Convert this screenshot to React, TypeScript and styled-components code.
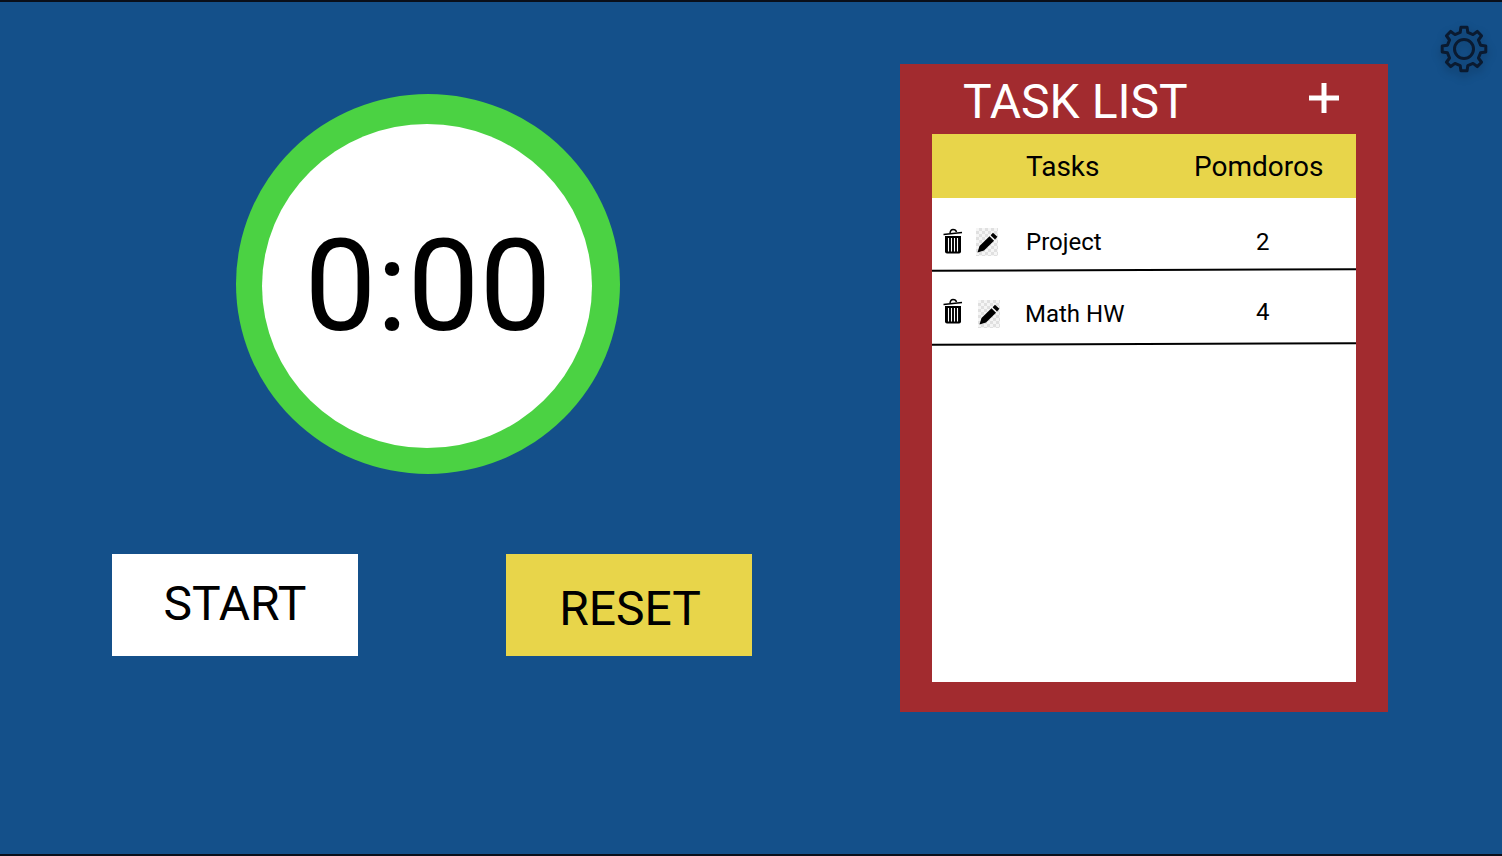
import React from "react";
import styled, { createGlobalStyle } from "styled-components";

interface ITask {
  name: string;
  pomodoros: number;
  height: number;
  trashTop: number;
  editLeft: number;
  nameLeft: number;
  countTop: number;
}

const tasks: ITask[] = [
  { name: "Project", pomodoros: 2, height: 72, trashTop: 30, editLeft: 13, nameLeft: 28, countTop: 29 },
  { name: "Math HW", pomodoros: 4, height: 74, trashTop: 28, editLeft: 15, nameLeft: 25, countTop: 27 },
];

// eight rounded teeth, one every 45deg
const gearPath = () => {
  const point = (r: number, deg: number) => {
    const a = ((deg - 90) * Math.PI) / 180;
    return `${(27 + r * Math.cos(a)).toFixed(2)} ${(27 + r * Math.sin(a)).toFixed(2)}`;
  };
  let d = "";
  for (let i = 0; i < 8; i++) {
    const a = i * 45;
    d += `${i === 0 ? "M" : "L"}${point(17, a - 13)} L${point(22, a - 8)} L${point(22, a + 8)} L${point(17, a + 13)} `;
  }
  return d + "Z";
};

const GlobalStyle = createGlobalStyle`
  html, body {
    margin: 0;
    padding: 0;
    background: #14508a;
    font-family: Roboto, "Liberation Sans", sans-serif;
  }
`;

const Page = styled.div`
  box-sizing: border-box;
  width: 1502px;
  height: 856px;
  background: #14508a;
  border-top: 2px solid #0a0f1a;
  border-bottom: 2px solid #0a0f1a;
  position: relative;
  display: flex;
  overflow: hidden;
`;

const TimerColumn = styled.div`
  width: 900px;
  padding: 92px 0 0 112px;
  box-sizing: border-box;
  display: flex;
  flex-direction: column;
`;

const Ring = styled.div`
  width: 384px;
  height: 380px;
  margin-left: 124px;
  border-radius: 50%;
  background: #4bd243;
  display: flex;
  align-items: center;
  justify-content: center;
`;

const Face = styled.div`
  width: 330px;
  height: 324px;
  margin: 4px 0 0 -2px;
  padding-left: 2px;
  box-sizing: border-box;
  border-radius: 50%;
  background: #fff;
  color: #000;
  font-size: 128px;
  line-height: 324px;
  text-align: center;
`;

const Buttons = styled.div`
  display: flex;
  gap: 148px;
  margin-top: 80px;
`;

const Button = styled.div<{ $bg: string; $line: number; $inset: number }>`
  box-sizing: border-box;
  width: 246px;
  height: 102px;
  padding-left: ${(props) => props.$inset}px;
  background: ${(props) => props.$bg};
  color: #000;
  font-size: 48px;
  line-height: ${(props) => props.$line}px;
  text-align: center;
`;

const Panel = styled.div`
  box-sizing: border-box;
  width: 488px;
  height: 648px;
  margin-top: 62px;
  padding: 0 32px 30px;
  background: #a22b2f;
  display: flex;
  flex-direction: column;
`;

const PanelHeader = styled.div`
  height: 70px;
  display: flex;
  color: #fff;
  position: relative;
`;

const PanelTitle = styled.div`
  font-size: 48px;
  line-height: 76px;
  margin-left: 31px;
`;

const AddIcon = styled.svg`
  width: 32px;
  height: 32px;
  position: absolute;
  left: 376px;
  top: 18px;
`;

const Table = styled.div`
  flex: 1;
  background: #fff;
  display: flex;
  flex-direction: column;
`;

const TableHead = styled.div`
  height: 64px;
  background: #e8d54a;
  color: #000;
  font-size: 28px;
  line-height: 66px;
  display: flex;
`;

const HeadTasks = styled.div`
  margin-left: 94px;
  width: 168px;
`;

const Row = styled.div<{ $height: number }>`
  box-sizing: border-box;
  height: ${(props) => props.$height}px;
  padding-right: 86px;
  position: relative;
  display: flex;
  align-items: flex-start;
  color: #000;
  font-size: 24px;

  &::after {
    content: "";
    position: absolute;
    left: 0;
    right: 0;
    bottom: -0.5px;
    height: 2px;
    background: #000;
    transform: rotate(-0.2deg);
  }
`;

const TrashButton = styled.svg<{ $top: number }>`
  width: 20px;
  height: 26px;
  margin: ${(props) => props.$top}px 0 0 11px;
  flex: none;
`;

const EditButton = styled.div<{ $left: number }>`
  width: 22px;
  height: 28px;
  margin: 30px 0 0 ${(props) => props.$left}px;
  flex: none;
  display: flex;
  align-items: center;
  justify-content: center;
  background: repeating-conic-gradient(#e0e0e0 0 25%, #f5f5f5 0 50%) 0 0 / 6px 6px;
`;

const TaskName = styled.div<{ $left: number }>`
  flex: 1;
  margin: 29px 0 0 ${(props) => props.$left}px;
  line-height: 30px;
`;

const TaskCount = styled.div<{ $top: number }>`
  width: 14px;
  line-height: 30px;
  margin-top: ${(props) => props.$top}px;
`;

const SettingsIcon = styled.svg`
  position: absolute;
  left: 1437px;
  top: 20px;
  width: 54px;
  height: 54px;
  filter: drop-shadow(0 4px 4px rgba(0, 0, 0, 0.25));
`;

const Trash = ({ top }: { top: number }) => (
  <TrashButton $top={top} viewBox="0 0 20 26">
    <path d="M0.5 6.5 L19 4.5" stroke="#000" strokeWidth="1.6" />
    <path d="M7 5 Q7.5 1.5 10 1.5 Q13 1.5 13.5 4" stroke="#000" strokeWidth="1.4" fill="none" />
    <path d="M2 8 H18 V23.5 Q18 25.5 16 25.5 H4 Q2 25.5 2 23.5 Z" fill="#000" />
    <path d="M5.5 10 V23.5 M8.5 10 V23.5 M11.5 10 V23.5 M14.5 10 V23.5" stroke="#fff" strokeWidth="1.1" />
  </TrashButton>
);

const Pencil = () => (
  <svg width="21" height="21" viewBox="0 0 21 21">
    <path d="M0.5 20.5 L2.5 14 L12.5 4.2 L17 8.7 L7 18.5 Z" fill="#000" />
    <path d="M13.6 3.2 L16 0.8 L20.4 4.8 L18 7.6 Z" fill="#000" />
  </svg>
);

const App = () => (
  <Page>
    <GlobalStyle />
    <TimerColumn>
      <Ring>
        <Face>0:00</Face>
      </Ring>
      <Buttons>
        <Button $bg="#fff" $line={100} $inset={0}>START</Button>
        <Button $bg="#e8d54a" $line={110} $inset={2}>RESET</Button>
      </Buttons>
    </TimerColumn>
    <Panel>
      <PanelHeader>
        <PanelTitle>TASK LIST</PanelTitle>
        <AddIcon viewBox="0 0 32 32">
          <path d="M16 1 V31 M1 16 H31" stroke="#fff" strokeWidth="5" />
        </AddIcon>
      </PanelHeader>
      <Table>
        <TableHead>
          <HeadTasks>Tasks</HeadTasks>
          <div>Pomdoros</div>
        </TableHead>
        {tasks.map((task) => (
          <Row key={task.name} $height={task.height}>
            <Trash top={task.trashTop} />
            <EditButton $left={task.editLeft}>
              <Pencil />
            </EditButton>
            <TaskName $left={task.nameLeft}>{task.name}</TaskName>
            <TaskCount $top={task.countTop}>{task.pomodoros}</TaskCount>
          </Row>
        ))}
      </Table>
    </Panel>
    <SettingsIcon viewBox="0 0 54 54" fill="none" stroke="#0a1a30" strokeWidth="3" strokeLinejoin="round">
      <path d={gearPath()} />
      <circle cx="27" cy="27" r="9.5" />
    </SettingsIcon>
  </Page>
);

export default App;
